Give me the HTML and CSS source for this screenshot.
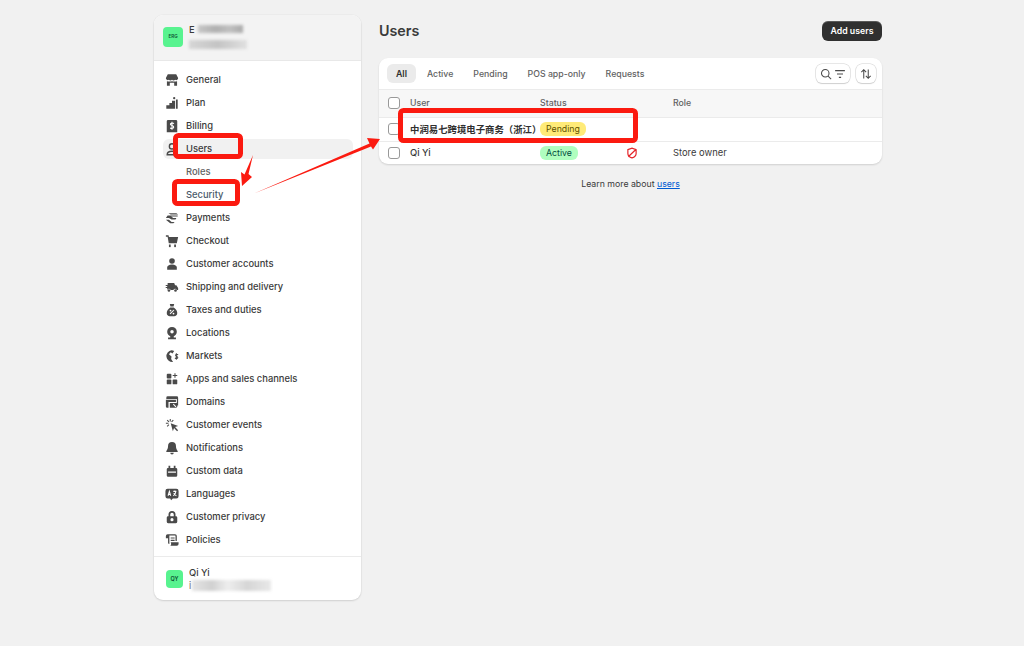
FILE: index.html
```html
<!DOCTYPE html>
<html lang="en">
<head>
<meta charset="utf-8">
<title>Users</title>
<link rel="stylesheet" href="styles.css">
</head>
<body>
<div class="page">
  <aside class="sidebar">
    <header class="store">
      <div class="avatar avatar-store">ERG</div>
      <div class="who">
        <div class="who-name"><span>E</span><i class="smudge smudge-name"></i></div>
        <i class="smudge smudge-mail"></i>
      </div>
    </header>
    <nav class="nav">
      <a class="item"><svg class="ic" viewBox="0 0 16 16"><path d="M3.2 1.5h9.6l2.2 4.3a2.2 2.2 0 0 1-3.4 2 2.8 2.8 0 0 1-3.6 0 2.8 2.8 0 0 1-3.6 0A2.2 2.2 0 0 1 1 5.800z"/><path d="M2.200 9.300q2.800 1 5.800 0 3 1 5.800 0V14.500h-3.300v-3.500h-5v3.500H2.200z"/></svg>General</a>
      <a class="item"><svg class="ic" viewBox="0 0 16 16"><path d="M1.500 14.500v-4h3.500V8H8V5.500h3.500V14.500z"/><path d="M12.500 14.500V4h2v10.500z"/><circle cx="10.500" cy="2.500" r="1.300"/></svg>Plan</a>
      <a class="item"><svg class="ic" viewBox="0 0 16 16"><path d="M3.500 1h9A1.500 1.500 0 0 1 14 2.500V15H2V2.500A1.500 1.500 0 0 1 3.500 1z"/><path class="knock" d="M10.300 5.200Q8 3.800 6.400 5.200q-.8 1.500 1.600 2.300 2.600.8 1.700 2.500-1.500 1.400-3.900.2M8 3.200v9"/></svg>Billing</a>
      <a class="item item-active"><svg class="ic ic-line" viewBox="0 0 16 16"><circle cx="8" cy="5" r="3"/><path d="M2.500 14.500c0-3 2-4 5.500-4s5.500 1 5.500 4z"/></svg>Users</a>
      <a class="item item-sub">Roles</a>
      <a class="item item-sub item-sel">Security</a>
      <a class="item"><svg class="ic" viewBox="0 0 16 16"><path d="M4 2.500h9l2 1.500H6.500zM3 5h11.500v1.300H7L9.500 8H13l-1 1.800H7.500L4.500 8H1z"/><path d="M1 10h3.500l3 2.500H11L9.500 14H6z"/></svg>Payments</a>
      <a class="item"><svg class="ic" viewBox="0 0 16 16"><path d="M1 1.500h3l.5 2h10.500L13.500 10.500H4.300L3 3H1z"/><rect x="4.500" y="12" width="2" height="3"/><rect x="10.500" y="12" width="2" height="3"/></svg>Checkout</a>
      <a class="item"><svg class="ic" viewBox="0 0 16 16"><circle cx="8" cy="4.500" r="3.200"/><path d="M2.500 14.500V12c0-2 2-3.500 5.500-3.500s5.500 1.500 5.500 3.500v2.500z"/></svg>Customer accounts</a>
      <a class="item"><svg class="ic" viewBox="0 0 16 16"><path d="M3 3.500h7.500l1 2.500h1.500l2 3v2.500h-1.600a2 2 0 0 0-3.800 0H6.400a2 2 0 0 0-3.800 0H2.500V9H.8V8h1.700V6.800H.8V5.800h2.200z"/><circle cx="4.500" cy="12" r="1.500"/><circle cx="12" cy="12" r="1.500"/></svg>Shipping and delivery</a>
      <a class="item"><svg class="ic" viewBox="0 0 16 16"><path d="M5.500 1h5L9.800 4H6.200zM6 5h4c2.500 1.500 4 4 4 6.500 0 2.500-1.500 3.500-3.500 3.500h-5C3.500 15 2 14 2 11.500 2 9 3.500 6.500 6 5z"/><path class="knock" d="M5.800 12.500l4.400-4.500"/><circle class="dot" cx="6.300" cy="8.600" r="1"/><circle class="dot" cx="9.700" cy="12" r="1"/></svg>Taxes and duties</a>
      <a class="item"><svg class="ic" viewBox="0 0 16 16"><path fill-rule="evenodd" d="M8 1a5.500 5.500 0 0 1 5.500 5.500c0 2.300-1.500 4.300-3.500 5.100V13h2.500v2h-9v-2H6v-1.400C4 10.800 2.500 8.800 2.500 6.500A5.500 5.500 0 0 1 8 1zm0 3.500a2 2 0 1 0 0 4 2 2 0 0 0 0-4z"/></svg>Locations</a>
      <a class="item"><svg class="ic" viewBox="0 0 16 16"><path d="M7.500 1.500a6.500 6.500 0 0 1 3 .8L8.500 5 6.500 3.800 4.500 6l3 2.500-.5 3 2.200 3.300A6.700 6.700 0 1 1 7.500 1.500z"/><path class="ray" d="M15 6.800q-1-.9-2-.6-1.400.5-.6 1.600l1.800 1.200q1 1.200-.6 1.900-1.200.3-2.200-.6M13 4.800v7.500"/></svg>Markets</a>
      <a class="item"><svg class="ic" viewBox="0 0 16 16"><rect x="2" y="2" width="5.300" height="5.300" rx="1"/><rect x="2" y="8.700" width="5.300" height="5.300" rx="1"/><rect x="8.700" y="8.700" width="5.300" height="5.300" rx="1"/><path d="M10.800 1.500h1.200v2h2v1.200h-2v2h-1.200v-2h-2V3.500h2z"/></svg>Apps and sales channels</a>
      <a class="item"><svg class="ic" viewBox="0 0 16 16"><path d="M3 1.500h10.500A1.500 1.500 0 0 1 15 3v9h-1.500V4.500H1.500V3A1.500 1.500 0 0 1 3 1.500z"/><path d="M1 5.500h11.500V8H4v6.500H2.500A1.500 1.500 0 0 1 1 13z"/><path d="M5.500 9H14v4l-1 1.500H5.500z"/><path class="knock" d="M9.500 10.500l3 3"/></svg>Domains</a>
      <a class="item"><svg class="ic" viewBox="0 0 16 16"><path d="M6.500 6l8.500 3-3.500 1.300L15 14l-1.200 1.200-3.500-3.700L9 15z"/><path class="ray" d="M6 1v3M1 6h3M2.500 2.500l2 2M9.500 2.500l-2 2M2.500 9.500l2-2"/></svg>Customer events</a>
      <a class="item"><svg class="ic" viewBox="0 0 16 16"><path d="M8 1a4.500 4.500 0 0 1 4.500 4.500c0 3 .8 4.500 2 6v1H1.500v-1c1.200-1.500 2-3 2-6A4.500 4.500 0 0 1 8 1z"/><path d="M6 13.500h4a2 2 0 0 1-4 0z"/></svg>Notifications</a>
      <a class="item"><svg class="ic" viewBox="0 0 16 16"><path fill-rule="evenodd" d="M4 2h2v2.500h4V2h2v2.500h.500A1.500 1.500 0 0 1 14 6v7a1.500 1.500 0 0 1-1.500 1.500h-9A1.500 1.500 0 0 1 2 13V6a1.500 1.500 0 0 1 1.500-1.500H4zM3.500 8.500v1.500h9V8.500z"/></svg>Custom data</a>
      <a class="item"><svg class="ic" viewBox="0 0 16 16"><path d="M3 2h10a2.500 2.500 0 0 1 2.500 2.500v6A2.500 2.500 0 0 1 13 13H9l-2 2-1-2H3A2.500 2.500 0 0 1 .500 10.500v-6A2.500 2.500 0 0 1 3 2z"/><path class="knock" d="M3.500 10l1.500-5 1.500 5M4 8.500h2M9.500 5h3.500M11.200 4v1M12.500 5c-.3 2-1.500 4-3 5M10 7c.5 1.500 2 2.500 3 3"/></svg>Languages</a>
      <a class="item"><svg class="ic" viewBox="0 0 16 16"><path fill-rule="evenodd" d="M8 1a4 4 0 0 1 4 4v2h.5A1.500 1.500 0 0 1 14 8.500v5a1.500 1.500 0 0 1-1.500 1.500h-9A1.500 1.500 0 0 1 2 13.500v-5A1.500 1.500 0 0 1 3.500 7H4V5a4 4 0 0 1 4-4zm0 2a2 2 0 0 0-2 2v2h4V5a2 2 0 0 0-2-2zm0 6.200a1.800 1.800 0 1 0 0 3.600 1.800 1.800 0 0 0 0-3.600z"/></svg>Customer privacy</a>
      <a class="item"><svg class="ic" viewBox="0 0 16 16"><path fill-rule="evenodd" d="M3 1.500h8.500A2 2 0 0 1 13.500 3.500V9H12V3.500a1 1 0 0 0-.3-.6H5V12.500A1.500 1.500 0 0 1 3.500 11V6H1V3.500a2 2 0 0 1 2-2zM6.500 5H11v1.300H6.500zm0 2.700H11V9H6.500z"/><path d="M6.500 10.500h9v2a2 2 0 0 1-2 2h-7.500c1-.8 1.500-2 .5-4z"/></svg>Policies</a>
    </nav>
    <footer class="account">
      <div class="avatar avatar-user">QY</div>
      <div class="who">
        <div class="who-user">Qi Yi</div>
        <div class="who-mail"><span>i</span><i class="smudge smudge-usermail"></i></div>
      </div>
    </footer>
  </aside>

  <main class="main">
    <div class="titlebar">
      <h1 class="title">Users</h1>
      <button class="primary">Add users</button>
    </div>
    <section class="card">
      <div class="tabs">
        <span class="tab tab-on">All</span>
        <span class="tab">Active</span>
        <span class="tab">Pending</span>
        <span class="tab">POS app-only</span>
        <span class="tab">Requests</span>
        <span class="tools">
          <button class="tool tool-filter">
            <svg class="tool-ic" viewBox="0 0 16 16"><circle cx="7" cy="7" r="5"/><path d="M10.800 10.800l4 4"/></svg>
            <svg class="tool-ic" viewBox="0 0 16 16"><path d="M1.500 3.500h13M4 8h8M6.500 12.500h3"/></svg>
          </button>
          <button class="tool tool-sort">
            <svg class="tool-ic" viewBox="0 0 16 16"><path d="M5 14V2.500M1.800 5.500L5 2.300l3.200 3.200M11 2v11.500M7.800 10.500l3.200 3.200 3.200-3.200"/></svg>
          </button>
        </span>
      </div>
      <div class="row row-head">
        <span class="check"></span><span>User</span><span>Status</span><span>Role</span>
      </div>
      <div class="row row-pending">
        <span class="check"></span>
        <span class="user-cjk">中润易七跨境电子商务（浙江）</span>
        <span class="status"><span class="badge badge-pending">Pending</span></span>
        <span></span>
      </div>
      <div class="row row-last">
        <span class="check"></span>
        <span class="user-name">Qi Yi</span>
        <span class="status"><span class="badge badge-active">Active</span>
          <svg class="shield" viewBox="0 0 16 16"><path d="M2.500 3.500L8 1.500l5.500 2v5c0 3-2.500 5-5.500 6-3-1-5.500-3-5.500-6zM3 13L13.500 3"/></svg>
        </span>
        <span>Store owner</span>
      </div>
    </section>
    <p class="learn">Learn more about <a class="learn-link">users</a></p>
  </main>
</div>

<svg class="marks" viewBox="0 0 1024 646">
  <rect class="mark" x="175.500" y="135.500" width="65" height="21" rx="3"/>
  <rect class="mark" x="174.500" y="181.500" width="63" height="22" rx="3"/>
  <rect class="mark" x="400.500" y="110.500" width="235" height="30" rx="3"/>
  <polygon class="arrow" points="253,155 248.500,174 252,177 242,186 241,172 244.500,174.500"/>
  <polygon class="arrow" points="253,194 369.500,143.500 367,138 380,139 373,149.500 371,146.500"/>
</svg>
</body>
</html>
```
FILE: styles.css
```css
* { box-sizing: border-box; }
html, body { margin: 0; height: 100%; }
body {
  background: #f1f1f1;
  color: #3a3a3a;
  font-family: Inter, "Noto Sans CJK SC", sans-serif;
  font-size: 9.4px;
  overflow: hidden;
  position: relative;
}
.page { display: flex; align-items: flex-start; gap: 18px; padding: 15px 0 0 154px; }

/* sidebar */
.sidebar {
  width: 207px;
  height: 585px;
  background: #fff;
  border-radius: 9px;
  box-shadow: 0 1px 2px rgba(0,0,0,.12), 0 0 0 1px rgba(0,0,0,.02);
  display: flex;
  flex-direction: column;
  overflow: hidden;
}
.store {
  height: 46px;
  flex: none;
  background: #f3f3f3;
  border-bottom: 1px solid #e8e8e8;
  display: flex;
  align-items: center;
  gap: 6px;
  padding: 0 0 0 9px;
}
.avatar {
  display: flex;
  align-items: center;
  justify-content: center;
  background: #58f38f;
  color: #0c5132;
  font-weight: 600;
  border-radius: 4px;
}
.avatar-store { width: 20px; height: 20px; font-size: 4.500px; margin-top: -2px; }
.avatar-user { width: 17px; height: 18px; font-size: 5.500px; }
.who { display: flex; flex-direction: column; }
.who-name { display: flex; align-items: center; font-weight: 500; height: 12px; gap: 1px; margin-top: -3px; }
.who-user { font-weight: 500; height: 13px; line-height: 13px; }
.who-mail { display: flex; align-items: center; height: 13px; color: #616161; gap: 1px; }
.smudge { display: block; filter: blur(1.500px); }
.smudge-name { width: 45px; height: 8px; margin-left: 2px; background: linear-gradient(90deg, #c6c6c6, #b0b0b0 40%, #c0c0c0 70%, #aaa); }
.smudge-mail { width: 58px; height: 9px; margin-top: 5px; background: linear-gradient(90deg, #d6d6d6, #c4c4c4 50%, #e0e0e0); }
.smudge-usermail { width: 79px; height: 11px; background: linear-gradient(90deg, #e4e4e4, #d0d0d0 25%, #eee 45%, #d6d6d6 70%, #e8e8e8); }

.nav { flex: 1; padding: 9px 8px 0 9px; display: flex; flex-direction: column; }
.item {
  height: 20px;
  flex: none;
  margin-bottom: 3px;
  display: flex;
  align-items: center;
  gap: 7px;
  padding: 0 0 2px 2px;
  border-radius: 6px;
  font-weight: 500;
  color: #3a3a3a;
}
.item-active { background: #f1f1f1; }
.item-sub { padding-left: 23px; color: #616161; }
.item-sel { color: #4a5a6a; }
.ic { width: 14px; height: 14px; flex: none; fill: #4a4a4a; margin-top: 2px; }
.ic-line { fill: none; stroke: #4a4a4a; stroke-width: 1.600; }
.knock { fill: none; stroke: #fff; stroke-width: 1.200; }
.ray { fill: none; stroke: #4a4a4a; stroke-width: 1.200; }
.dot { fill: #fff; }

.account {
  height: 44px;
  flex: none;
  border-top: 1px solid #ebebeb;
  display: flex;
  align-items: center;
  gap: 6px;
  padding: 0 0 0 12px;
}

/* main */
.main { width: 503px; }
.titlebar { display: flex; justify-content: space-between; align-items: center; height: 20px; margin: 6px 0 17px; }
.title { margin: 0; padding-bottom: 2px; font-size: 14.300px; font-weight: 600; color: #3a3a3a; }
.primary {
  width: 60px;
  height: 20px;
  padding: 0;
  border: 0;
  border-radius: 6px;
  background: #303030;
  box-shadow: inset 0 1px 0 rgba(255,255,255,.2);
  color: #fff;
  font: 600 8.750px Inter, sans-serif;
}
.card {
  background: #fff;
  border-radius: 9px;
  box-shadow: 0 1px 2px rgba(0,0,0,.14);
  overflow: hidden;
}
.tabs { height: 31px; display: flex; align-items: center; gap: 2px; padding: 0 6px 0 8px; font-size: 8.750px; }
.tab { height: 19px; padding: 0 9px; display: flex; align-items: center; border-radius: 6px; font-weight: 500; color: #616161; }
.tab-on { background: #ebebeb; color: #303030; font-weight: 600; }
.tools { margin-left: auto; display: flex; gap: 6px; }
.tool {
  height: 19px;
  display: flex;
  align-items: center;
  justify-content: center;
  gap: 2px;
  padding: 0;
  background: #fff;
  border: 0;
  border-radius: 6px;
  box-shadow: 0 0 0 .5px #d0d0d0, 0 1px 1px rgba(0,0,0,.18);
}
.tool-filter { width: 34px; }
.tool-sort { width: 20px; }
.tool-ic { width: 12px; height: 12px; fill: none; stroke: #4a4a4a; stroke-width: 1.400; }

.row {
  display: grid;
  grid-template-columns: 31px 130px 133px 1fr;
  align-items: center;
  border-top: 1px solid #ebebeb;
  color: #3a3a3a;
}
.row-head { height: 28px; padding-bottom: 1px; background: #f7f7f7; color: #616161; font-weight: 500; font-size: 8.750px; }
.row-pending { height: 24px; padding-bottom: 2px; }
.row-last { height: 23px; padding-bottom: 1px; }
.check {
  width: 12px;
  height: 12px;
  margin-left: 9px;
  border: 1px solid #999;
  border-radius: 3px;
  background: #fff;
}
.user-cjk { font-weight: 700; font-size: 9.400px; color: #303030; white-space: nowrap; }
.user-name { font-weight: 500; }
.status { display: flex; align-items: center; }
.badge { height: 14px; padding: 0 6px; display: flex; align-items: center; border-radius: 6px; font-weight: 400; font-size: 8.750px; }
.badge-pending { background: #ffeb78; color: #5e5200; }
.badge-active { background: #affebf; color: #014b40; }
.shield { width: 12px; height: 12px; margin-left: 48px; fill: none; stroke: #e5252a; stroke-width: 1.600; }
.learn { margin: 14px 0 0; text-align: center; line-height: 12px; color: #3a3a3a; font-size: 8.750px; }
.learn-link { color: #005bd3; text-decoration: underline; }

/* annotations drawn over the screenshot */
.marks { position: absolute; left: 0; top: 0; width: 1024px; height: 646px; pointer-events: none; }
.mark { fill: none; stroke: #fb1a10; stroke-width: 5; }
.arrow { fill: #fb1a10; }
```
